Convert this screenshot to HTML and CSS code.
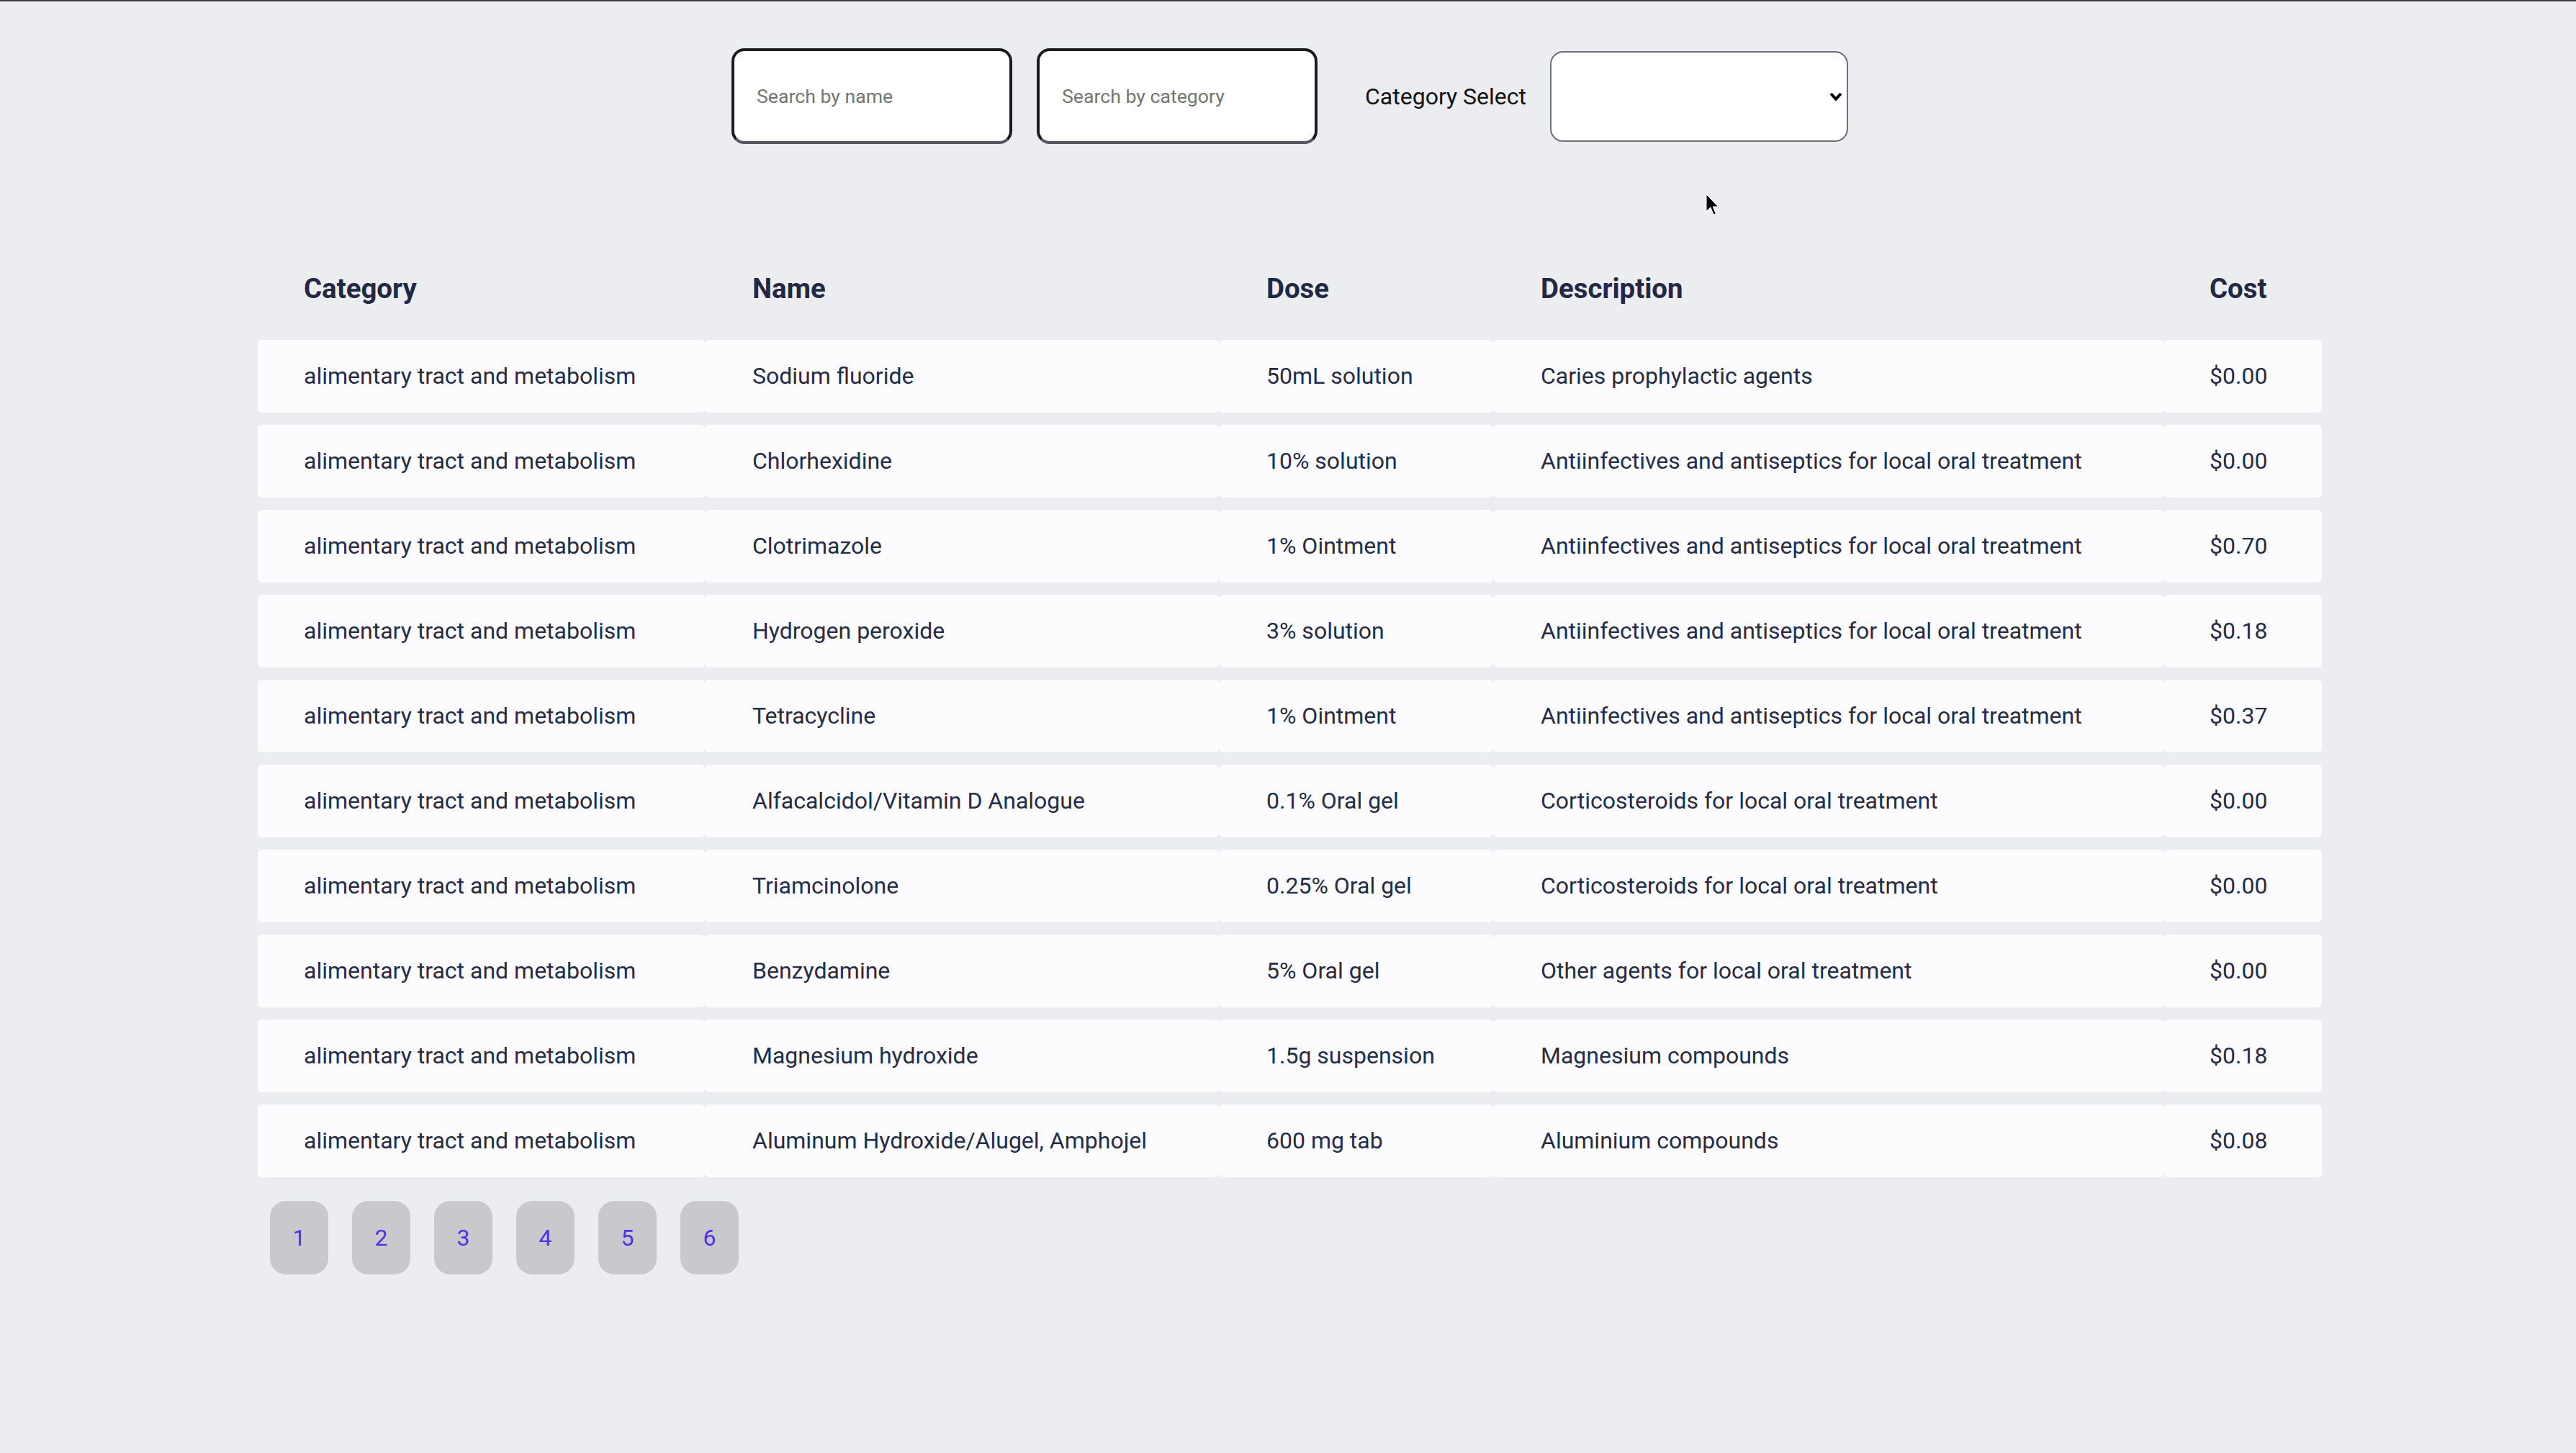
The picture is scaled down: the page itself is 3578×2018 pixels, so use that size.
FILE: index.html
```html
<!DOCTYPE html>
<html lang="en">
<head>
<meta charset="utf-8">
<title>Medicines</title>
<link rel="stylesheet" href="styles.css">
</head>
<body>
<div class="topline"></div>
<div class="controls">
  <input class="search" type="text" placeholder="Search by name">
  <input class="search" type="text" placeholder="Search by category">
  <label class="sel-label" for="cat">Category Select</label>
  <div class="select-wrap">
    <select id="cat" class="select"><option></option></select>
    <svg class="chev" width="18" height="13" viewBox="0 0 18 13"><path d="M2 2 L9 9.5 L16 2" fill="none" stroke="#000" stroke-width="4"/></svg>
  </div>
</div>

<div class="wrap">
  <table class="meds">
    <colgroup>
      <col class="c-cat"><col class="c-name"><col class="c-dose"><col class="c-desc"><col class="c-cost">
    </colgroup>
    <thead>
      <tr><th>Category</th><th>Name</th><th>Dose</th><th>Description</th><th>Cost</th></tr>
    </thead>
    <tbody>
      <tr><td>alimentary tract and metabolism</td><td>Sodium fluoride</td><td>50mL solution</td><td>Caries prophylactic agents</td><td>$0.00</td></tr>
      <tr><td>alimentary tract and metabolism</td><td>Chlorhexidine</td><td>10% solution</td><td>Antiinfectives and antiseptics for local oral treatment</td><td>$0.00</td></tr>
      <tr><td>alimentary tract and metabolism</td><td>Clotrimazole</td><td>1% Ointment</td><td>Antiinfectives and antiseptics for local oral treatment</td><td>$0.70</td></tr>
      <tr><td>alimentary tract and metabolism</td><td>Hydrogen peroxide</td><td>3% solution</td><td>Antiinfectives and antiseptics for local oral treatment</td><td>$0.18</td></tr>
      <tr><td>alimentary tract and metabolism</td><td>Tetracycline</td><td>1% Ointment</td><td>Antiinfectives and antiseptics for local oral treatment</td><td>$0.37</td></tr>
      <tr><td>alimentary tract and metabolism</td><td>Alfacalcidol/Vitamin D Analogue</td><td>0.1% Oral gel</td><td>Corticosteroids for local oral treatment</td><td>$0.00</td></tr>
      <tr><td>alimentary tract and metabolism</td><td>Triamcinolone</td><td>0.25% Oral gel</td><td>Corticosteroids for local oral treatment</td><td>$0.00</td></tr>
      <tr><td>alimentary tract and metabolism</td><td>Benzydamine</td><td>5% Oral gel</td><td>Other agents for local oral treatment</td><td>$0.00</td></tr>
      <tr><td>alimentary tract and metabolism</td><td>Magnesium hydroxide</td><td>1.5g suspension</td><td>Magnesium compounds</td><td>$0.18</td></tr>
      <tr><td>alimentary tract and metabolism</td><td>Aluminum Hydroxide/Alugel, Amphojel</td><td>600 mg tab</td><td>Aluminium compounds</td><td>$0.08</td></tr>
    </tbody>
  </table>
  <div class="pager">
    <button class="page">1</button>
    <button class="page">2</button>
    <button class="page">3</button>
    <button class="page">4</button>
    <button class="page">5</button>
    <button class="page">6</button>
  </div>
</div>

<svg class="cursor" width="19" height="32" viewBox="0 0 12 20"><path d="M0.5 0.5 L0.5 16.5 L4.3 12.8 L7 19.2 L9.3 18.2 L6.7 12 L11.5 12 Z" fill="#000" stroke="#fff" stroke-width="0.9" stroke-linejoin="round"/></svg>
</body>
</html>
```

FILE: styles.css
```css
html, body {
  margin: 0;
  padding: 0;
}
body {
  position: relative;
  min-height: 100vh;
  background: #ebedf1;
  font-family: Roboto, "Liberation Sans", Arial, sans-serif;
  color: #262c47;
}
.topline {
  height: 2px;
  background: #3c3d46;
}
.controls {
  display: flex;
  align-items: center;
  justify-content: center;
  padding: 65px 0 0 5px;
  height: 133px;
}
.search {
  box-sizing: border-box;
  width: 390px;
  height: 133px;
  border: 4px solid #1c1c1f;
  border-bottom-color: #55565e;
  border-radius: 18px;
  background: #fff;
  padding: 0 0 0 31px;
  font-family: Roboto, "Liberation Sans", Arial, sans-serif;
  font-size: 26.67px;
  color: #222;
  outline: none;
}
.search + .search {
  margin-left: 34px;
}
.search::placeholder {
  color: #757575;
}
.sel-label {
  margin-left: 66px;
  font-size: 32px;
  color: #111;
}
.select-wrap {
  position: relative;
  margin-left: 33px;
  width: 414px;
  height: 126px;
}
.select {
  box-sizing: border-box;
  width: 414px;
  height: 126px;
  border: 2px solid #6f6f78;
  border-radius: 18px;
  background: #fff;
  -webkit-appearance: none;
  appearance: none;
  font-size: 26px;
  outline: none;
}
.chev {
  position: absolute;
  right: 8px;
  top: 57px;
  pointer-events: none;
}
.wrap {
  margin: 128px 0 0 358px;
  width: 2867px;
}
.meds {
  width: 2867px;
  table-layout: fixed;
  border-collapse: separate;
  border-spacing: 0 17px;
}
.c-cat { width: 621px; }
.c-name { width: 714px; }
.c-dose { width: 381px; }
.c-desc { width: 931px; }
.c-cost { width: 220px; }
.meds th {
  text-align: left;
  font-weight: 700;
  font-size: 38.4px;
  line-height: 46px;
  padding: 33px 0 31px 66px;
  color: #222843;
}
.meds th:first-child {
  padding-left: 64px;
}
.meds th:last-child {
  padding-left: 64px;
}
.meds td {
  background: #fcfcfe;
  font-size: 32px;
  line-height: 38px;
  padding: 31px 0 32px 66px;
  color: #262c45;
  border-radius: 6px;
  white-space: nowrap;
}
.meds td:first-child {
  padding-left: 64px;
}
.meds td:last-child {
  padding-left: 64px;
}
.pager {
  display: flex;
  gap: 33px;
  margin: 16px 0 0 17px;
}
.page {
  width: 81px;
  height: 102px;
  border: none;
  border-radius: 22px;
  background: #c9c9cd;
  color: #5330e6;
  font-family: Roboto, "Liberation Sans", Arial, sans-serif;
  font-size: 32px;
  padding: 0;
}
.cursor {
  position: absolute;
  left: 2369px;
  top: 268px;
}
```
